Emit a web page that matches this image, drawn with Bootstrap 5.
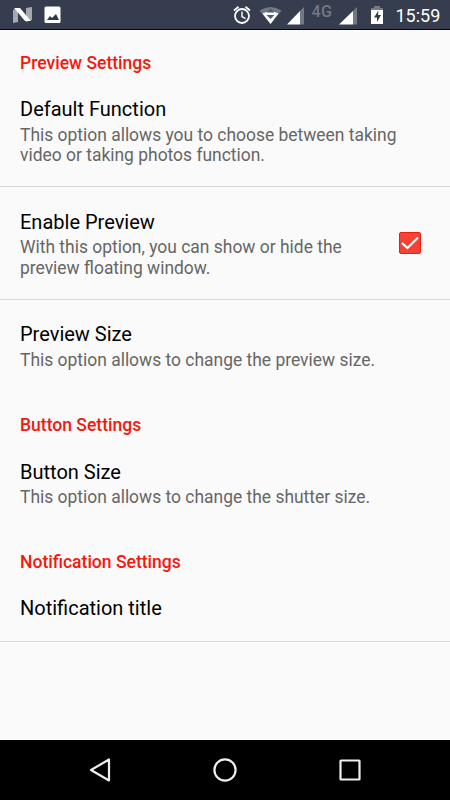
<!DOCTYPE html>
<html lang="en">
<head>
<meta charset="utf-8">
<meta name="viewport" content="width=device-width, initial-scale=1">
<title>Settings</title>
<link href="https://cdn.jsdelivr.net/npm/bootstrap@5.3.0/dist/css/bootstrap.min.css" rel="stylesheet">
<style>
body{font-family:Roboto,sans-serif;background:#fafafa;color:#000;height:800px;overflow:hidden}
.status-bar{height:30px;background:#353d4f;border-bottom:1px solid #05070b}
.status-bar svg,.system-nav svg{display:block}
.clock{font-size:18px;line-height:30px;font-weight:400;color:#fff}
.category{height:44.5px;padding:22.5px 20px 0;font-size:17.55px;line-height:20.5px;font-weight:500;color:#f5180c;margin:0}
.pref{padding:23.75px 20px 21.5px;border:0}
.pref-line{box-shadow:inset 0 -1px #d9d9d9}
.pref-group-end{padding-bottom:22.5px}
.pref-last{padding-bottom:20.75px}
.pref-title{font-size:20px;line-height:23.5px;font-weight:400;margin:0}
.pref-summary{font-size:17.45px;line-height:20.5px;color:#666;margin:2.75px 0 0}
.toggle{width:22px;height:22px;margin:0 9px 2.5px 0}
.system-nav{height:60px;background:#000}
</style>
</head>
<body class="d-flex flex-column">
<header class="status-bar flex-shrink-0">
<svg width="450" height="29" viewBox="0 0 450 29">
<path d="M13 10l5-2v14l-5 1zM26 8l6-1v13l-6 2z" fill="#a5a9b1"/>
<path d="M14 8h6l11 13h-6z" fill="#fff"/>
<rect x="44.5" y="6.5" width="16" height="16.5" rx="1.5" fill="#fff"/>
<path d="M47 20l3-4 2 2 4-4 3 6z" fill="#30384a"/>
<g fill="none" stroke="#fff" stroke-width="1.8"><circle cx="242" cy="16" r="7"/><path d="M242 11.5v5l3.5 2.2" stroke-width="1.4"/><path d="M234 10.5l4.5-3.8M250 10.5l-4.5-3.8"/></g>
<path d="M259.500 10.500q11-7 22 0L270.500 24z" fill="#737985"/>
<path d="M262.500 13.500q8-4 16 0L270.500 24z" fill="#fff"/>
<path d="M266.500 12.500l4-4 4 4zM266.500 15l4 4 4-4z" fill="#525a68"/>
<path d="M304 7v17.500h-4V11z" fill="#737985"/><path d="M287 24.500L300 11v13.500z" fill="#fff"/>
<text x="311.500" y="17.200" font-size="16" font-weight="500" letter-spacing=".4" fill="#737985">4G</text>
<path d="M357 7v17.500h-4V11z" fill="#737985"/><path d="M339 24.500L353 11v13.500z" fill="#fff"/>
<path d="M371 10V8h3V6h6v2h3v2z" fill="#737985"/><path d="M371 10h12v14h-12z" fill="#fff"/>
<path d="M378.500 10.500l-4.500 7h3V22l4-7h-3z" fill="#30384a"/>
<text class="clock" x="395.500" y="22" fill="#fff">15:59</text>
</svg>
</header>
<main class="flex-grow-1">
<h2 class="category">Preview Settings</h2>
<section class="pref pref-line">
<h3 class="pref-title">Default Function</h3>
<p class="pref-summary">This option allows you to choose between taking<br>video or taking photos function.</p>
</section>
<section class="pref pref-line d-flex align-items-center justify-content-between">
<div><h3 class="pref-title">Enable Preview</h3>
<p class="pref-summary">With this option, you can show or hide the<br>preview floating window.</p></div>
<svg class="toggle" viewBox="0 0 22 22"><rect x=".5" y=".5" width="21" height="21" rx="1.500" fill="#f44336" stroke="#f9180c"/><path d="M3 11l5.500 5L19 5.500" fill="none" stroke="#fff" stroke-width="2.200"/></svg>
</section>
<section class="pref pref-group-end">
<h3 class="pref-title">Preview Size</h3>
<p class="pref-summary">This option allows to change the preview size.</p>
</section>
<h2 class="category">Button Settings</h2>
<section class="pref">
<h3 class="pref-title">Button Size</h3>
<p class="pref-summary">This option allows to change the shutter size.</p>
</section>
<h2 class="category">Notification Settings</h2>
<section class="pref pref-line pref-last">
<h3 class="pref-title">Notification title</h3>
</section>
</main>
<footer class="system-nav flex-shrink-0">
<svg width="450" height="60" viewBox="0 0 450 60" fill="none" stroke="#eee" stroke-width="2.200" stroke-linejoin="round"><path d="M109 19.500v21L91 30z"/><circle cx="225" cy="30" r="10.600"/><rect x="340.500" y="20.500" width="19" height="19" rx=".5"/></svg>
</footer>
<script src="https://cdn.jsdelivr.net/npm/bootstrap@5.3.0/dist/js/bootstrap.bundle.min.js"></script>
</body>
</html>
